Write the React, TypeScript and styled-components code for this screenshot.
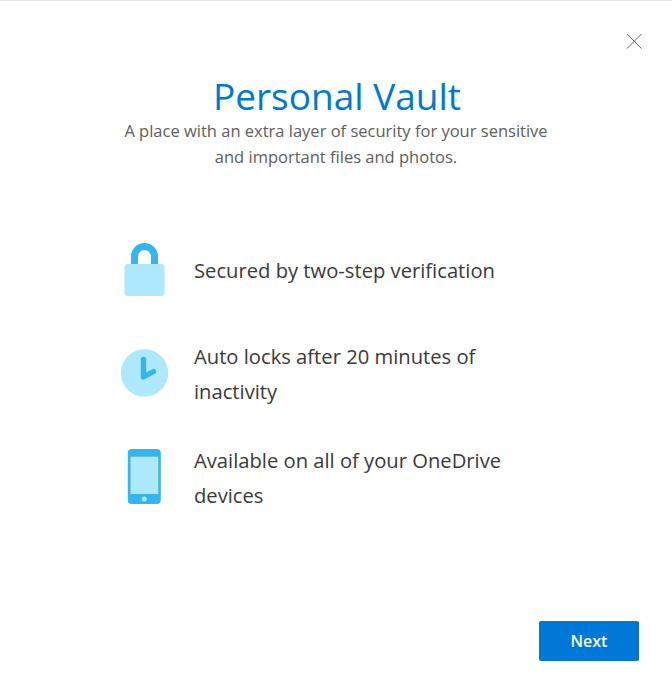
import React from "react";
import styled, { createGlobalStyle } from "styled-components";

const GlobalStyle = createGlobalStyle`
  html, body {
    margin: 0;
    padding: 0;
    background: #fff;
  }
  body {
    font-family: "Open Sans", "Noto Sans", "Liberation Sans", sans-serif;
  }
`;

const Dialog = styled.div`
  box-sizing: border-box;
  width: 672px;
  height: 682px;
  border-top: 1px solid #e6e6e6;
  background: #fff;
  display: flex;
  flex-direction: column;
  position: relative;
`;

const CloseButton = styled.button`
  position: absolute;
  top: 32px;
  right: 30px;
  width: 16px;
  height: 16px;
  padding: 0;
  border: 0;
  background: none;
  line-height: 0;
`;

const Header = styled.header`
  padding-top: 70px;
  text-align: center;
`;

const Title = styled.h1`
  margin: 0;
  padding-left: 2px;
  font-size: 37px;
  font-weight: 400;
  line-height: 50px;
  color: #0078d7;
`;

const Subtitle = styled.p`
  margin: -3px auto 0;
  width: 450px;
  font-size: 16.5px;
  line-height: 26px;
  color: #605e5c;
`;

const Features = styled.ul`
  list-style: none;
  margin: 0;
  padding: 66px 0 0 120px;
  display: flex;
  flex-direction: column;
  gap: 34px;
`;

const Feature = styled.li`
  display: flex;
  align-items: center;
  height: 70px;
`;

const IconSlot = styled.div`
  width: 48px;
  margin-right: 26px;
  display: flex;
  justify-content: center;
  flex: none;
`;

const FeatureText = styled.span`
  width: 320px;
  margin-top: -2px;
  font-size: 20.2px;
  line-height: 35px;
  color: #3b3a39;
`;

const Footer = styled.footer`
  margin-top: auto;
  padding: 0 33px 21px 0;
  display: flex;
  justify-content: flex-end;
`;

const NextButton = styled.button`
  width: 100px;
  height: 40px;
  border: 0;
  border-radius: 2px;
  background: #0078d7;
  color: #fff;
  font-family: inherit;
  font-size: 16px;
  font-weight: 600;
`;

const LockIcon = () => (
  <svg width="42" height="56" viewBox="0 0 42 56">
    <path d="M11.5 23V13.5a10 10 0 0 1 20 0V23" fill="none" stroke="#33b5f0" strokeWidth="7" />
    <rect x="1.5" y="21" width="40" height="32" rx="3" fill="#aee8fc" />
  </svg>
);

const ClockIcon = () => (
  <svg width="48" height="52" viewBox="0 0 48 52">
    <circle cx="24.5" cy="24" r="23.7" fill="#aee8fc" />
    <path d="M23.5 10.5V28L33.5 22.5" fill="none" stroke="#33b5f0" strokeWidth="5.4" strokeLinecap="round" strokeLinejoin="round" />
  </svg>
);

const PhoneIcon = () => (
  <svg width="34" height="60" viewBox="0 0 34 60">
    <rect x="0.8" y="0" width="33" height="55" rx="4" fill="#33b5f0" />
    <rect x="3.5" y="7.7" width="27.8" height="37.3" fill="#aee8fc" />
    <circle cx="17.3" cy="50" r="2.5" fill="#aee8fc" />
  </svg>
);

const features = [
  { icon: <LockIcon />, text: "Secured by two-step verification" },
  { icon: <ClockIcon />, text: "Auto locks after 20 minutes of inactivity" },
  { icon: <PhoneIcon />, text: "Available on all of your OneDrive devices" },
];

const App = () => {
  return (
    <>
      <GlobalStyle />
      <Dialog>
        <CloseButton aria-label="Close">
          <svg width="16" height="16" viewBox="0 0 16 16">
            <path d="M1 1l14.5 14.5M15.5 1L1 15.5" stroke="#5f5f5f" strokeWidth="1" />
          </svg>
        </CloseButton>
        <Header>
          <Title>Personal Vault</Title>
          <Subtitle>A place with an extra layer of security for your sensitive and important files and photos.</Subtitle>
        </Header>
        <Features>
          {features.map((f) => (
            <Feature key={f.text}>
              <IconSlot>{f.icon}</IconSlot>
              <FeatureText>{f.text}</FeatureText>
            </Feature>
          ))}
        </Features>
        <Footer>
          <NextButton>Next</NextButton>
        </Footer>
      </Dialog>
    </>
  );
};

export default App;
